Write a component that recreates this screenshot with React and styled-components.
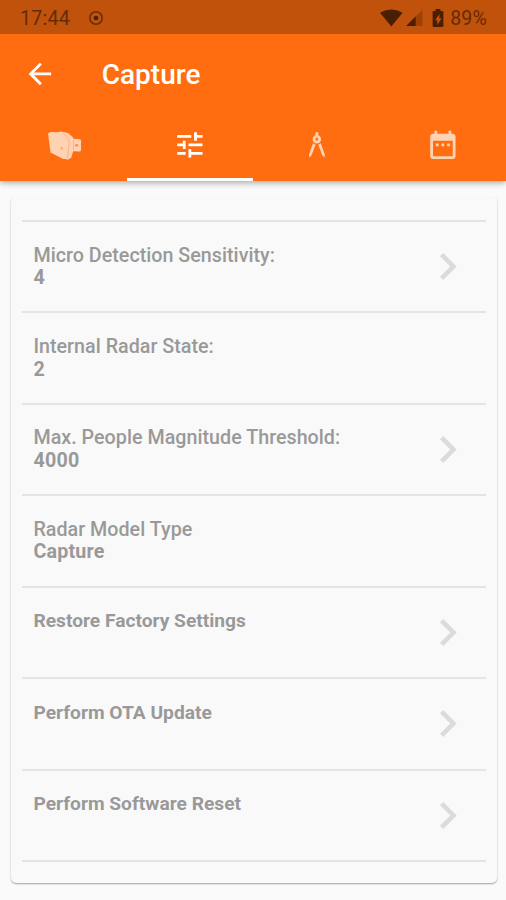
import styled, { createGlobalStyle } from "styled-components";

const rows = [
    { label: "Micro Detection Sensitivity:", value: "4", arrow: true },
    { label: "Internal Radar State:", value: "2" },
    { label: "Max. People Magnitude Threshold:", value: "4000", arrow: true },
    { label: "Radar Model Type", value: "Capture" },
    { value: "Restore Factory Settings", arrow: true },
    { value: "Perform OTA Update", arrow: true },
    { value: "Perform Software Reset", arrow: true },
];

const StatusIcons = () => (
    <svg width="64" height="20" viewBox="380 7 64 20">
        <path d="M380 11.8Q391.3 5.2 402.6 11.8L391.3 25.4z" />
        <path d="M422.4 8.8V25H406.2z" opacity=".3" />
        <path d="M415.6 15.6V25H406.2z" />
        <path
            fillRule="evenodd"
            d="M435.6 8h4.8v2h2q1 0 1 1v14q0 1-1 1h-8.8q-1 0-1-1V11q0-1 1-1h2zM439.4 13l-4.3 6.2h2.2V24l4.2-6.4h-2.1z"
        />
    </svg>
);

const RadarIcon = () => (
    <svg width="34" height="30" viewBox="47 129 34 30">
        <path d="M48 132.3l3-1.3 7 .2 3-.7 7 1.5 4.5 3.8 1 2 6.5.4 1 1v10l-1 1.4-6.8-.3-2 6.5-3 1.8-5.5-.8-12.2-6.2z" fill="#ffd2b2" />
        <path d="M63 132.5q6.500 4.200 6.200 9.500l-1.700 15M73.500 138.800v10.500" fill="none" stroke="#ffaf7e" strokeWidth="1" />
        <circle cx="61.5" cy="147.3" r="1.2" fill="#ffa77b" />
        <circle cx="76.6" cy="144.3" r="1.5" fill="#ff8d55" />
    </svg>
);

const App = () => {
    return (
        <>
            <GlobalStyle />
            <Screen>
                <Header>
                    <StatusBar>
                        <Clock>17:44</Clock>
                        <svg width="16" height="16" viewBox="0 0 16 16">
                            <circle cx="8" cy="8" r="6.2" fill="none" stroke="#6a2e06" strokeWidth="1.6" />
                            <circle cx="8" cy="8" r="2.3" />
                        </svg>
                        <StatusRight>
                            <StatusIcons />
                            <Battery>89%</Battery>
                        </StatusRight>
                    </StatusBar>
                    <Toolbar>
                        <Icon viewBox="0 0 24 24">
                            <path d="M20 11H7.83l5.59-5.59L12 4l-8 8 8 8 1.41-1.41L7.83 13H20v-2z" />
                        </Icon>
                        <Title>Capture</Title>
                    </Toolbar>
                    <Tabs>
                        <Tab>
                            <RadarIcon />
                        </Tab>
                        <Tab $active>
                            <Icon viewBox="0 0 24 24">
                                <path d="M3 17v2h6v-2H3zM3 5v2h10V5H3zm10 16v-2h8v-2h-8v-2h-2v6h2zM7 9v2H3v2h4v2h2V9H7zm14 4v-2H11v2h10zm-6-4h2V7h4V5h-4V3h-2v6z" />
                            </Icon>
                        </Tab>
                        <Tab>
                            <Icon viewBox="0 0 24 24">
                                <path d="M6.36 18.78L6.61 21l1.62-1.54 2.77-7.6c-.68-.17-1.28-.51-1.77-.98L6.36 18.78zM14.77 10.88c-.49.47-1.1.81-1.77.98l2.77 7.6L17.39 21l.26-2.22-2.88-7.9zM15 8c0-1.3-.84-2.4-2-2.82V3h-2v2.18C9.84 5.6 9 6.7 9 8c0 1.66 1.34 3 3 3s3-1.34 3-3zm-3 1c-.55 0-1-.45-1-1s.45-1 1-1 1 .45 1 1-.45 1-1 1z" />
                            </Icon>
                        </Tab>
                        <Tab>
                            <Icon viewBox="0 0 24 24">
                                <path d="M9 11H7v2h2v-2zm4 0h-2v2h2v-2zm4 0h-2v2h2v-2zm2-7h-1V2h-2v2H8V2H6v2H5c-1.11 0-1.99.9-1.99 2L3 20c0 1.1.89 2 2 2h14c1.1 0 2-.9 2-2V6c0-1.1-.9-2-2-2zm0 16H5V9h14v11z" />
                            </Icon>
                        </Tab>
                    </Tabs>
                </Header>
                <Card>
                    {rows.map((row) => (
                        <Row key={row.label || row.value}>
                            <div>
                                {row.label && <Label>{row.label}</Label>}
                                {row.label ? <Value>{row.value}</Value> : <Action>{row.value}</Action>}
                            </div>
                            {row.arrow && (
                                <Chevron viewBox="8.59 6 7.41 12">
                                    <path d="M10 6L8.59 7.41 13.17 12l-4.58 4.59L10 18l6-6z" />
                                </Chevron>
                            )}
                        </Row>
                    ))}
                </Card>
            </Screen>
        </>
    );
}

const GlobalStyle = createGlobalStyle`
    * {
        box-sizing: border-box;
    }

    body {
        margin: 0;
        background-color: #fafafa;
        font-family: Roboto, sans-serif;
    }

    svg {
        display: block;
        flex-shrink: 0;
    }
`

const Screen = styled.div`
    width: 506px;
    height: 900px;
    overflow: hidden;
`

const Header = styled.header`
    height: 181px;
    background-color: #ff6d10;
    box-shadow: 0 2px 6px rgba(0, 0, 0, .32);
`

const StatusBar = styled.div`
    display: flex;
    align-items: center;
    height: 34px;
    padding: 1px 19px 0 20px;
    background-color: #c0520c;
    color: #652b05;
    fill: #4a1e02;
`

const Clock = styled.span`
    width: 67.5px;
    padding-top: 1px;
    font-size: 19.7px;
    letter-spacing: .2px;
`

const StatusRight = styled.div`
    display: flex;
    align-items: center;
    gap: 6px;
    margin-left: auto;
`

const Battery = styled.span`
    padding-top: 1px;
    font-size: 19.5px;
    letter-spacing: .2px;
`

const Toolbar = styled.div`
    display: flex;
    align-items: center;
    height: 80px;
    padding-left: 23px;
    fill: white;
`

const Title = styled.h1`
    margin: 2px 0 0 45px;
    color: white;
    font-size: 28px;
    font-weight: 500;
    line-height: 32px;
`

const Icon = styled.svg`
    width: 33.75px;
    height: 33.75px;
`

const Tabs = styled.nav`
    display: flex;
    height: 67px;
`

const Tab = styled.div`
    display: flex;
    flex: 1;
    align-items: center;
    justify-content: center;
    padding: 0 0 2px 1px;
    border-bottom: 3px solid ${({ $active }) => ($active ? "white" : "transparent")};
    fill: ${({ $active }) => ($active ? "white" : "#ffd2b2")};
`

const Card = styled.main`
    height: 686px;
    margin: 16px 9px 0 11px;
    padding: 23px 11px 0;
    border-radius: 5px;
    background-color: #f9f9f9;
    box-shadow: 0 1px 2px rgba(0, 0, 0, .26), 0 1px 1px rgba(0, 0, 0, .12);
`

const Row = styled.div`
    display: flex;
    justify-content: space-between;
    height: 91.43px;
    padding: 22.6px 29px 0 11.4px;
    border-top: 2px solid #e4e4e4;
    color: #999;
    fill: #dbdbdb;

    &:last-child {
        height: 93.43px;
        border-bottom: 2px solid #e4e4e4;
    }
`

const Label = styled.div`
    font-size: 19.7px;
    font-weight: 500;
    letter-spacing: .02px;
    line-height: 22.5px;
`

const Value = styled.div`
    font-size: 19.7px;
    font-weight: 700;
    letter-spacing: .2px;
    line-height: 22.5px;
`

const Action = styled.div`
    font-size: 19.2px;
    font-weight: 700;
    line-height: 22.5px;
`

const Chevron = styled.svg`
    width: 16.7px;
    height: 27px;
    margin-top: 8.4px;
`

export default App;
